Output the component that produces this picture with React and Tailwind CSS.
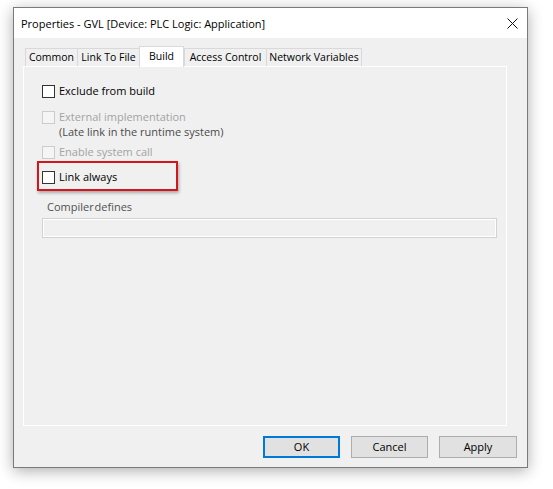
import React from "react";

const CloseIcon = () => (
  <svg width="11" height="11" viewBox="0 0 11 11" fill="none" stroke="#111" strokeWidth="1">
    <path d="M0.5 0.5 L10.5 10.5 M10.5 0.5 L0.5 10.5" />
  </svg>
);

const Box = ({ disabled }) => (
  <span
    className={
      disabled
        ? "block w-[13px] h-[13px] border border-[#cccccc] bg-[#f5f5f5] shrink-0"
        : "block w-[13px] h-[13px] border border-[#333333] bg-white shrink-0"
    }
  />
);

const tabs = [
  { label: "Common", w: "w-[52px]" },
  { label: "Link To File", w: "w-[62px]" },
  { label: "Build", w: "w-[45px]", active: true },
  { label: "Access Control", w: "w-[82px]" },
  { label: "Network Variables", w: "w-[96px]", last: true },
];

export default function App() {
  return (
    <div
      className="w-[553px] h-[489px] bg-white pt-[7px] pl-[13px] text-[11px] text-black"
      style={{ fontFamily: '"Open Sans", "Noto Sans", sans-serif' }}
    >
      <div className="w-[515px] h-[461px] border border-[#7a7a7a] bg-[#f0f0f0] flex flex-col shadow-[0_3px_14px_rgba(0,0,0,0.32)]">
        {/* Title bar */}
        <div className="h-[30px] bg-white flex items-center justify-between pl-[7px] pr-[9px]">
          <span className="text-[11px] leading-none">Properties - GVL [Device: PLC Logic: Application]</span>
          <CloseIcon />
        </div>

        {/* Body */}
        <div className="flex-1 flex flex-col pl-[9px] pr-[10px] pt-[8px] pb-[9px]">
          {/* Tabs */}
          <div className="flex items-end h-[20px] pl-[2px] relative z-10 text-[10.5px]">
            {tabs.map((t) =>
              t.active ? (
                <div
                  key={t.label}
                  className={`${t.w} h-[21px] -mb-px bg-white border border-b-0 border-[#d9d9d9] flex justify-center pt-[2px] leading-[14px]`}
                >
                  {t.label}
                </div>
              ) : (
                <div
                  key={t.label}
                  className={`${t.w} h-[18px] bg-[#f0f0f0] border-t border-l ${t.last ? "border-r" : ""} border-[#d9d9d9] flex items-center justify-center`}
                >
                  {t.label}
                </div>
              )
            )}
          </div>

          {/* Panel */}
          <div className="w-[484px] h-[360px] border border-white bg-[#f0f0f0] pl-[18px] pt-[18px] flex flex-col">
            <div className="flex items-center gap-[4px] h-[13px]">
              <Box />
              <span>Exclude from build</span>
            </div>
            <div className="flex items-center gap-[4px] h-[13px] mt-[13px] text-[#a3a3a3]">
              <Box disabled />
              <span>External implementation</span>
            </div>
            <div className="h-[15px] mt-px pl-[17px] flex items-center text-[#4a4a4a]">
              (Late link in the runtime system)
            </div>
            <div className="flex items-center gap-[4px] h-[13px] mt-[6px] text-[#a3a3a3]">
              <Box disabled />
              <span>Enable system call</span>
            </div>
            <div className="relative flex items-center gap-[4px] h-[13px] mt-[12px]">
              <Box />
              <span>Link always</span>
              <div className="absolute left-[-5px] top-[-10px] w-[141px] h-[30px] border-2 border-[#d3151c] shadow-[1px_2px_3px_rgba(0,0,0,0.3)]" />
            </div>
            <div className="h-[15px] mt-[16px] pl-[5px] flex items-center text-[#505050] [word-spacing:-2px]">
              Compiler defines
            </div>
            <div className="w-[455px] h-[20px] mt-[3px] border border-[#d2d2d2] bg-[#f0f0f0] shadow-[inset_0_0_0_1px_#ffffff]" />
          </div>

          {/* Buttons */}
          <div className="flex justify-end gap-[11px] mt-[10px]">
            <button className="w-[77px] h-[22px] bg-[#e1e1e1] border-2 border-[#0078d7] flex items-center justify-center">
              OK
            </button>
            <button className="w-[77px] h-[22px] bg-[#e1e1e1] border border-[#adadad] flex items-center justify-center">
              Cancel
            </button>
            <button className="w-[78px] h-[22px] bg-[#e1e1e1] border border-[#adadad] flex items-center justify-center">
              Apply
            </button>
          </div>
        </div>
      </div>
    </div>
  );
}
